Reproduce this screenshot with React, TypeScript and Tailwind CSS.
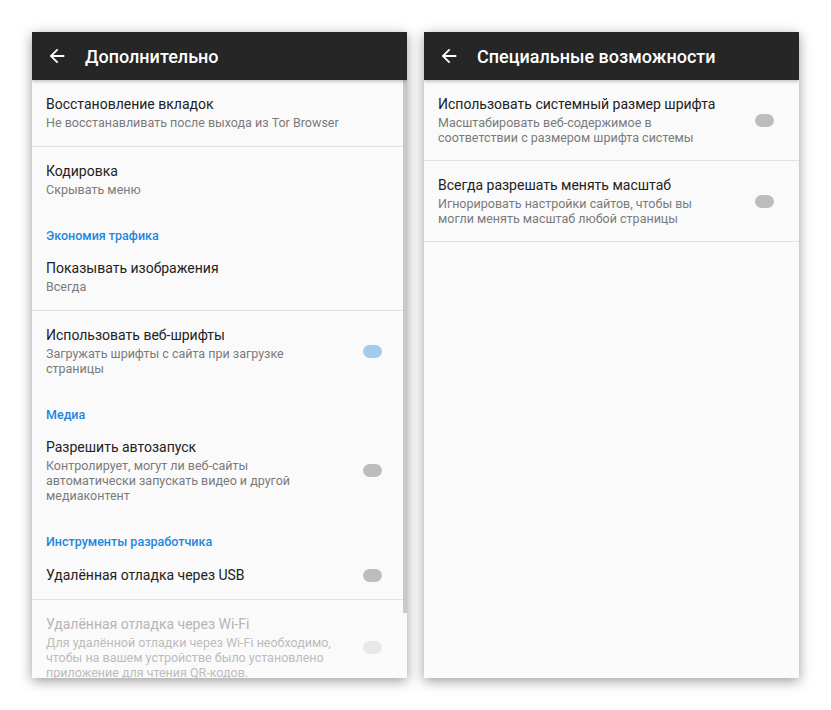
import React from "react";

type Row =
  | { kind: "section"; label: string }
  | {
      kind: "item";
      title: string;
      summary?: string[];
      toggle?: "on" | "off" | "disabled";
      divider?: boolean;
      disabled?: boolean;
    };

const advanced: Row[] = [
  {
    kind: "item",
    title: "Восстановление вкладок",
    summary: ["Не восстанавливать после выхода из Tor Browser"],
    divider: true,
  },
  { kind: "item", title: "Кодировка", summary: ["Скрывать меню"] },
  { kind: "section", label: "Экономия трафика" },
  { kind: "item", title: "Показывать изображения", summary: ["Всегда"], divider: true },
  {
    kind: "item",
    title: "Использовать веб-шрифты",
    summary: ["Загружать шрифты с сайта при загрузке", "страницы"],
    toggle: "on",
  },
  { kind: "section", label: "Медиа" },
  {
    kind: "item",
    title: "Разрешить автозапуск",
    summary: [
      "Контролирует, могут ли веб-сайты",
      "автоматически запускать видео и другой",
      "медиаконтент",
    ],
    toggle: "off",
  },
  { kind: "section", label: "Инструменты разработчика" },
  { kind: "item", title: "Удалённая отладка через USB", toggle: "off", divider: true },
  {
    kind: "item",
    title: "Удалённая отладка через Wi-Fi",
    summary: [
      "Для удалённой отладки через Wi-Fi необходимо,",
      "чтобы на вашем устройстве было установлено",
      "приложение для чтения QR-кодов.",
    ],
    toggle: "disabled",
    disabled: true,
  },
];

const accessibility: Row[] = [
  {
    kind: "item",
    title: "Использовать системный размер шрифта",
    summary: ["Масштабировать веб-содержимое в", "соответствии с размером шрифта системы"],
    toggle: "off",
    divider: true,
  },
  {
    kind: "item",
    title: "Всегда разрешать менять масштаб",
    summary: ["Игнорировать настройки сайтов, чтобы вы", "могли менять масштаб любой страницы"],
    toggle: "off",
    divider: true,
  },
];

function Toggle({ state }: { state: "on" | "off" | "disabled" }) {
  const color =
    state === "on" ? "bg-[#a3cbf0]" : state === "off" ? "bg-[#bdbdbd]" : "bg-[#e8e8e8]";
  return <div className={`h-[13px] w-[19px] shrink-0 rounded-full ${color}`} />;
}

function Screen({
  title,
  rows,
  scrollbar,
  tight,
}: {
  title: string;
  rows: Row[];
  scrollbar?: boolean;
  tight?: boolean;
}) {
  return (
    <div className="relative flex h-[646px] w-[375px] flex-col overflow-hidden bg-[#fafafa] shadow-[0_3px_12px_rgba(0,0,0,0.4)]">
      <div className="relative z-10 flex h-12 shrink-0 items-center bg-[#262626] pl-[14px] shadow-[0_2px_3px_rgba(0,0,0,0.2)]">
        <svg width="22" height="22" viewBox="0 0 24 24" fill="#fff">
          <path d="M20 11H7.83l5.59-5.59L12 4l-8 8 8 8 1.41-1.41L7.83 13H20v-2z" />
        </svg>
        <h1 className="ml-[17px] text-[18px] font-medium text-white">{title}</h1>
      </div>
      <div className="flex flex-col">
        {rows.map((row, i) =>
          row.kind === "section" ? (
            <div
              key={i}
              className="pl-[14px] pt-[15px] text-[12.5px] font-medium leading-4 text-[#1f86e0]"
            >
              {row.label}
            </div>
          ) : (
            <div
              key={i}
              className={`flex items-center pl-[14px] pr-[25px] ${
                row.summary ? (tight ? "pb-[15px] pt-[15px]" : "pb-4 pt-[15px]") : "pb-[15px] pt-4"
              } ${row.divider ? "border-b border-[#e2e2e2]" : ""}`}
            >
              <div className="flex-1">
                <div
                  className={`text-[14px] leading-[18px] ${
                    row.disabled ? "text-[#b5b5b5]" : "text-[#222]"
                  }`}
                >
                  {row.title}
                </div>
                {row.summary && (
                  <div
                    className={`mt-0.5 text-[12.5px] leading-[15px] ${
                      row.disabled ? "text-[#bcbcbc]" : "text-[#7a7a7a]"
                    }`}
                  >
                    {row.summary.map((line) => (
                      <div key={line}>{line}</div>
                    ))}
                  </div>
                )}
              </div>
              {row.toggle && <Toggle state={row.toggle} />}
            </div>
          )
        )}
      </div>
      {scrollbar && (
        <div className="absolute right-0 top-12 h-[533px] w-1 bg-[#c9c9c9]" />
      )}
    </div>
  );
}

export default function App() {
  return (
    <div className="h-[710px] w-[831px] bg-white font-['Roboto',sans-serif]">
      <div className="flex gap-[17px] pl-8 pt-8">
        <Screen title="Дополнительно" rows={advanced} scrollbar />
        <Screen title="Специальные возможности" rows={accessibility} tight />
      </div>
    </div>
  );
}
